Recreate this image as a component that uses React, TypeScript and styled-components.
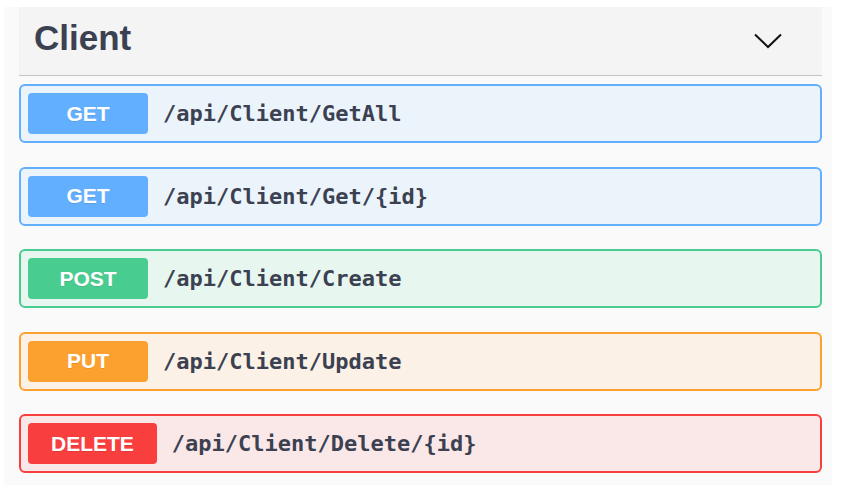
import styled, { createGlobalStyle } from 'styled-components';

type Method = 'get' | 'post' | 'put' | 'delete';

const colors: Record<Method, { main: string; bg: string }> = {
  get: { main: '#61affe', bg: '#ebf3fb' },
  post: { main: '#49cc90', bg: '#e8f6f0' },
  put: { main: '#fca130', bg: '#fbf1e6' },
  delete: { main: '#f93e3e', bg: '#fae7e7' },
};

const endpoints: { method: Method; path: string }[] = [
  { method: 'get', path: '/api/Client/GetAll' },
  { method: 'get', path: '/api/Client/Get/{id}' },
  { method: 'post', path: '/api/Client/Create' },
  { method: 'put', path: '/api/Client/Update' },
  { method: 'delete', path: '/api/Client/Delete/{id}' },
];

const App = () => {
  return (
    <>
      <GlobalStyle />
      <Panel>
        <Header>
          <Title>Client</Title>
          <Chevron width="28" height="16" viewBox="0 0 28 16">
            <polyline points="1,1.5 14,14 27,1.5" fill="none" stroke="#111" strokeWidth="2" />
          </Chevron>
        </Header>
        <List>
          {endpoints.map((e) => (
            <Row key={e.path} method={e.method}>
              <Badge method={e.method}>{e.method.toUpperCase()}</Badge>
              <Path>{e.path}</Path>
            </Row>
          ))}
        </List>
      </Panel>
    </>
  );
};

export default App;

const GlobalStyle = createGlobalStyle`
  body {
    margin: 0;
    background: #ffffff;
    font-family: 'Liberation Sans', Arial, sans-serif;
  }
`;

const Panel = styled.div`
  margin: 7px 0 0 4px;
  width: 828px;
  height: 478px;
  box-sizing: border-box;
  background: #fafafa;
  padding: 0 10px 12px 15px;
`;

const Header = styled.div`
  height: 69px;
  box-sizing: border-box;
  background: #f4f4f4;
  border-bottom: 1px solid #c3c4c8;
  display: flex;
  align-items: center;
  justify-content: space-between;
  padding: 0 40px 6px 15px;
`;

const Title = styled.h2`
  margin: 0;
  font-size: 35px;
  font-weight: 700;
  color: #3b4151;
`;

const Chevron = styled.svg`
  display: block;
  margin-top: 6px;
`;

const List = styled.div`
  display: flex;
  flex-direction: column;
  gap: 23.5px;
  padding-top: 8px;
`;

const Row = styled.div<{ method: Method }>`
  height: 59px;
  box-sizing: border-box;
  border: 2px solid ${(p) => colors[p.method].main};
  background: ${(p) => colors[p.method].bg};
  border-radius: 6px;
  display: flex;
  align-items: center;
  padding: 0 7px;
`;

const Badge = styled.div<{ method: Method }>`
  min-width: 120px;
  height: 41px;
  box-sizing: border-box;
  padding: 0 23px;
  border-radius: 4px;
  background: ${(p) => colors[p.method].main};
  color: #ffffff;
  font-family: 'Liberation Sans', Arial, sans-serif;
  font-weight: 700;
  font-size: 21px;
  display: flex;
  align-items: center;
  justify-content: center;
  text-shadow: 0 1px 0 rgba(0, 0, 0, 0.1);
`;

const Path = styled.span`
  margin-left: 15px;
  font-family: 'DejaVu Sans Mono', 'Liberation Mono', monospace;
  font-weight: 700;
  font-size: 22px;
  color: #3b4151;
`;
